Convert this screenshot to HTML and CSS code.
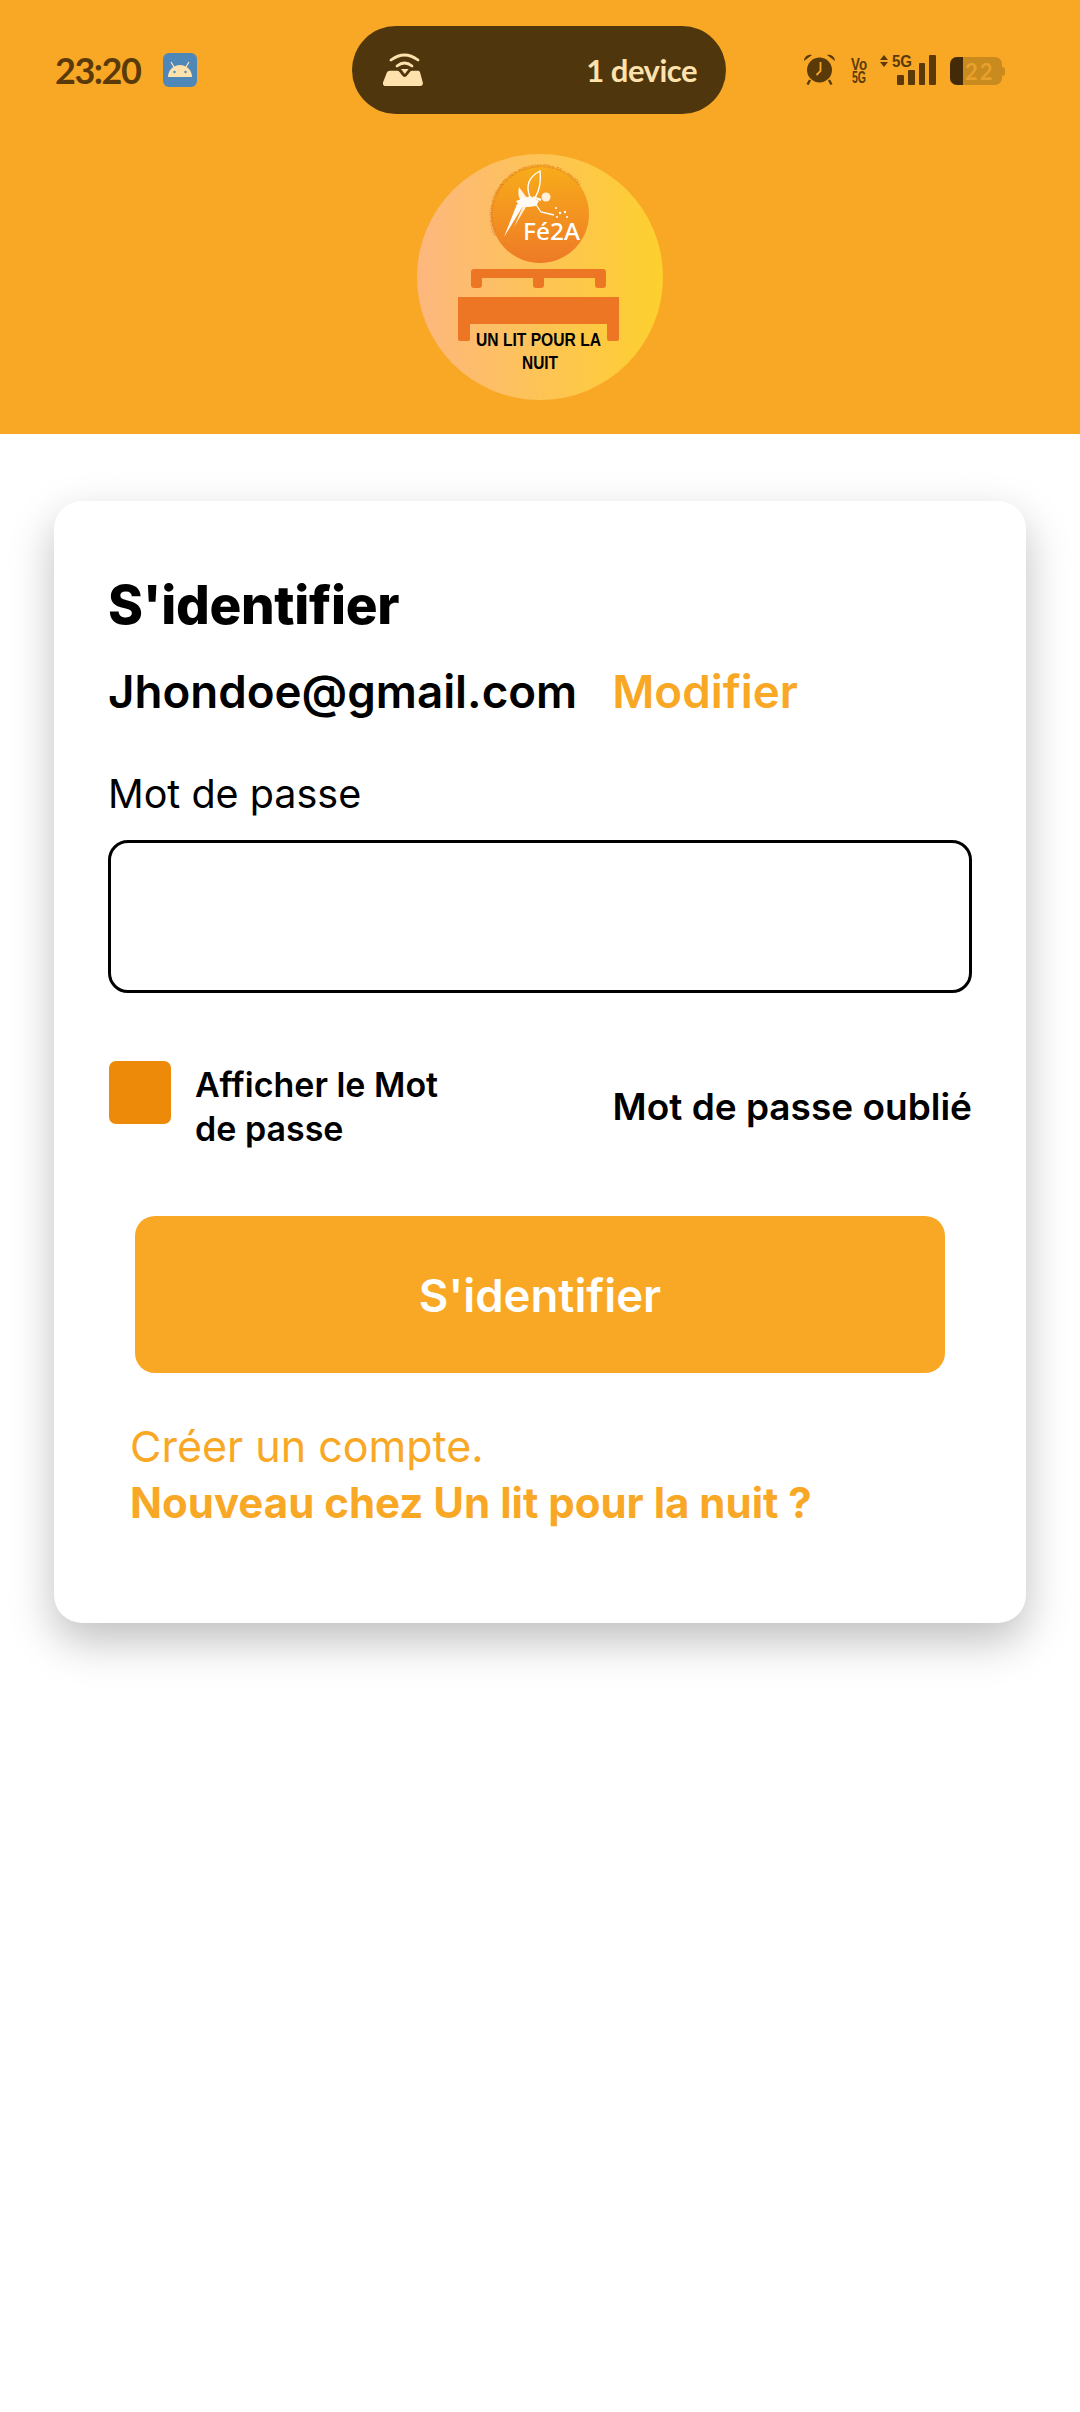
FILE: index.html
```html
<!DOCTYPE html>
<html lang="fr">
<head>
<meta charset="utf-8">
<title>S'identifier</title>
<link rel="stylesheet" href="styles.css">
</head>
<body>
<header class="header">
  <div class="statusbar">
    <div class="status-left">
      <span class="clock">23:20</span>
      <svg class="app-icon" viewBox="0 0 34 34"><rect width="34" height="34" rx="6" fill="#4f88b8"/><path d="M5 24a12 12 0 0 1 24 0z" fill="#fde2ad"/><path d="M11 14l-3-5M23 14l3-5" stroke="#fde2ad" stroke-width="1.300"/><circle cx="11.500" cy="19" r="1.200" fill="#4f88b8"/><circle cx="22.500" cy="19" r="1.200" fill="#4f88b8"/></svg>
    </div>
    <div class="pill">
      <svg class="hotspot" viewBox="0 0 40 34"><path d="M8 7q13.500-10 27 0" fill="none" stroke="#fde2ad" stroke-width="2.800" stroke-linecap="round"/><path d="M14 13q7.500-6 15 0" fill="none" stroke="#fde2ad" stroke-width="2.800" stroke-linecap="round"/><path d="M18 16h7.600l-3.800 5z" fill="#fde2ad"/><path d="M7 17.700h7.500c2.500 0 4.500 6.300 7.200 6.300s4.700-6.300 7.200-6.300h6c1.200 0 1.800.6 2.200 1.700l2.700 10c.5 2-.6 3.600-2.500 3.600H2.500C.6 33-.5 31.400 0 29.400l3.800-9.700c.5-1.300 1.700-2 3.200-2z" fill="#fde2ad"/></svg>
      <span class="pill-label">1 device</span>
    </div>
    <div class="status-right">
      <svg class="alarm" viewBox="0 0 31 32"><circle cx="15.500" cy="17" r="12.500" fill="#5b3a0a"/><path d="M0 8c0-4 4-7 8-6zM31 8c0-4-4-7-8-6z" fill="#5b3a0a"/><path d="M6 27l-2.500 4.500M25 27l2.500 4.500" stroke="#5b3a0a" stroke-width="2.400"/><path d="M16.500 9v9l-4 4" fill="none" stroke="#faa826" stroke-width="1.800"/></svg>
      <svg class="vo" viewBox="0 0 16 25"><text class="net" x="0" y="12" textLength="16" lengthAdjust="spacingAndGlyphs">Vo</text><text class="net" x="1" y="25" textLength="14" lengthAdjust="spacingAndGlyphs">5G</text></svg>
      <svg class="signal" viewBox="0 0 56 30"><path d="M4 0l4 5H0zM4 12L0 7h8z" fill="#5b3a0a"/><text class="net" x="12" y="12" textLength="20" lengthAdjust="spacingAndGlyphs">5G</text><rect x="17" y="20" width="7" height="10" rx="1" fill="#5b3a0a"/><rect x="28" y="15" width="7" height="15" rx="1" fill="#5b3a0a"/><rect x="39" y="8" width="6" height="22" rx="1" fill="#5b3a0a"/><rect x="49" y="0" width="7" height="30" rx="1" fill="#5b3a0a"/></svg>
      <div class="battery">
        <div class="battery-body"><span class="battery-level"></span><span class="battery-num">22</span></div>
        <span class="battery-cap"></span>
      </div>
    </div>
  </div>
  <svg class="logo" viewBox="0 0 246 246">
    <defs>
      <linearGradient id="disc" x1="0" y1="0" x2="1" y2="0"><stop offset="0" stop-color="#fdb77f"/><stop offset="1" stop-color="#fdd02d"/></linearGradient>
      <linearGradient id="badge" x1="0" y1="0" x2="0" y2="1"><stop offset="0" stop-color="#f8ad1a"/><stop offset="1" stop-color="#ee7a26"/></linearGradient>
      <path id="arc" d="M80 81A48 48 0 0 1 161 31"/>
    </defs>
    <circle cx="123" cy="123" r="123" fill="url(#disc)"/>
    <circle cx="123" cy="60" r="49" fill="url(#badge)"/>
    <text class="arc-text"><textPath href="#arc" textLength="139" lengthAdjust="spacingAndGlyphs">FEDERATION ETUDIANTE DES ASSOCIATIONS DE L'ANJOU</textPath></text>
    <path d="M113 43Q106 26 123 17Q125 32 118 44" fill="none" stroke="#fff" stroke-width="1.400"/>
    <path d="M110 44L102 33Q100 42 104 47z" fill="#fff" fill-opacity=".9"/>
    <path d="M99 47l14-5 9 5-3 5-8 1-8 0z" fill="#fff" fill-opacity=".95"/>
    <path d="M87 83L100 50l6 2z" fill="#fff"/>
    <path d="M97 73L106 52l3 1z" fill="#fff" fill-opacity=".85"/>
    <path d="M116 43l8 3" stroke="#fff" stroke-width="2"/>
    <circle cx="129" cy="43" r="4.500" fill="#fff" fill-opacity=".85"/>
    <path d="M118 49l6 9 13 3" fill="none" stroke="#fff" stroke-width="1.300"/>
    <circle cx="139" cy="54" r="1" fill="#fff"/><circle cx="143" cy="59" r="1.200" fill="#fff"/><circle cx="148" cy="58" r="1.200" fill="#fff"/><circle cx="150" cy="63" r="1" fill="#fff"/><circle cx="140" cy="63" r="1" fill="#fff"/>
    <text class="fe2a" x="106" y="86" textLength="57" lengthAdjust="spacingAndGlyphs">Fé2A</text>
    <path d="M57 115h129a3 3 0 0 1 3 3v13a3 3 0 0 1-3 3h-5a3 3 0 0 1-3-3v-7h-51v7a3 3 0 0 1-3 3h-5a3 3 0 0 1-3-3v-7H65v7a3 3 0 0 1-3 3h-5a3 3 0 0 1-3-3v-13a3 3 0 0 1 3-3z" fill="#ed7625"/>
    <path d="M41 143h161v42a2 2 0 0 1-2 2h-8a2 2 0 0 1-2-2v-15H53v15a2 2 0 0 1-2 2h-8a2 2 0 0 1-2-2z" fill="#ed7625"/>
    <text class="bed-text" x="59" y="192" textLength="125" lengthAdjust="spacingAndGlyphs">UN LIT POUR LA</text>
    <text class="bed-text" x="105" y="215" textLength="36" lengthAdjust="spacingAndGlyphs">NUIT</text>
  </svg>
</header>
<main class="card">
  <h1 class="title">S'identifier</h1>
  <p class="account"><span class="email">Jhondoe@gmail.com</span><a class="modify">Modifier</a></p>
  <label class="field-label">Mot de passe</label>
  <div class="input"></div>
  <div class="options">
    <span class="checkbox"></span>
    <span class="show-label">Afficher le Mot<br>de passe</span>
    <a class="forgot">Mot de passe oublié</a>
  </div>
  <div class="submit">S'identifier</div>
  <p class="signup"><span class="signup-line">Créer un compte.</span><strong class="signup-strong">Nouveau chez Un lit pour la nuit ?</strong></p>
</main>
</body>
</html>
```
FILE: styles.css
```css
* { box-sizing: border-box; }
html, body { margin: 0; padding: 0; }
body { width: 1080px; height: 2412px; background: #fff; font-family: Inter, "Liberation Sans", sans-serif; color: #000; overflow: hidden; }
.header { height: 434px; background: #f9a825; display: flex; flex-direction: column; align-items: center; padding-top: 26px; }
.statusbar { width: 100%; height: 88px; display: flex; align-items: center; padding-left: 55px; }
.status-left { flex: none; width: 297px; display: flex; align-items: center; gap: 23px; }
.clock { flex: none; font-family: Lato, sans-serif; font-weight: 700; font-size: 36px; color: #5b3a0a; width: 85px; letter-spacing: -1.500px; white-space: nowrap; }
.app-icon { flex: none; width: 34px; height: 34px; margin-top: -1px; }
.pill { flex: none; width: 374px; height: 88px; border-radius: 44px; background: #50360c; display: flex; align-items: center; justify-content: space-between; padding: 0 29px 0 31px; }
.hotspot { width: 40px; height: 34px; margin-top: -1px; }
.pill-label { font-family: Lato, sans-serif; font-size: 31px; font-weight: 700; color: #fde2ad; letter-spacing: -.5px; }
.status-right { flex: none; margin-left: 78px; display: flex; align-items: center; }
.alarm { flex: none; width: 31px; height: 32px; margin-top: -2px; }
.vo { flex: none; width: 16px; height: 25px; margin-left: 16px; margin-top: 1px; overflow: visible; }
.signal { flex: none; width: 56px; height: 30px; margin-left: 13px; overflow: visible; }
.net { font-family: "Liberation Sans", sans-serif; font-weight: 700; font-size: 16px; fill: #5b3a0a; }
.battery { flex: none; display: flex; align-items: center; margin-left: 14px; margin-top: 2px; }
.battery-body { position: relative; width: 52px; height: 28px; border-radius: 7px; background: #c98a1e; overflow: hidden; display: flex; align-items: center; padding-left: 15px; }
.battery-level { position: absolute; left: 0; top: 0; bottom: 0; width: 13px; background: #432b09; }
.battery-num { font-family: Lato, sans-serif; font-size: 22px; font-weight: 700; color: #e8a02c; letter-spacing: 2px; }
.battery-cap { width: 3px; height: 9px; border-radius: 0 3px 3px 0; background: #c98a1e; }
.logo { flex: none; width: 246px; height: 246px; margin-top: 40px; }
.arc-text { font-family: "Liberation Sans", sans-serif; font-size: 4.500px; fill: #e07a2c; }
.fe2a { font-family: "Noto Sans", sans-serif; font-weight: 500; font-size: 24px; fill: #fff; }
.bed-text { font-family: "Liberation Sans", sans-serif; font-weight: 700; font-size: 18px; fill: #000; }
.card { margin: 67px 54px 0; height: 1122px; border-radius: 28px; background: #fff; box-shadow: 0 18px 44px rgba(0, 0, 0, .25); padding: 72px 54px 0; display: flex; flex-direction: column; }
.title { margin: 0; font-size: 53px; line-height: 64px; font-weight: 800; letter-spacing: -.3px; }
.account { margin: 27px 0 0; display: flex; gap: 35px; font-size: 45.700px; line-height: 56px; font-weight: 600; }
.modify { color: #f9a825; }
.field-label { margin-top: 49px; font-size: 39.500px; line-height: 50px; }
.input { margin-top: 21px; height: 153px; border: 3px solid #000; border-radius: 20px; }
.options { margin-top: 68px; display: flex; align-items: flex-start; }
.checkbox { flex: none; width: 62px; height: 63px; margin-left: 1px; border-radius: 7px; background: #ed8a0a; }
.show-label { margin-left: 24px; margin-top: 2px; font-size: 34px; line-height: 44px; font-weight: 600; }
.forgot { margin-left: auto; margin-top: 24px; font-size: 37px; line-height: 44px; font-weight: 600; }
.submit { margin: 65px 27px 0; height: 157px; padding-top: 2px; border-radius: 20px; background: #f9a825; color: #fff; display: flex; align-items: center; justify-content: center; font-size: 45.500px; font-weight: 600; }
.signup { margin: 45px 0 0 22px; color: #f9a825; display: flex; flex-direction: column; font-size: 43px; line-height: 57px; }
.signup-strong { font-size: 42px; line-height: 56px; font-weight: 700; }
```
